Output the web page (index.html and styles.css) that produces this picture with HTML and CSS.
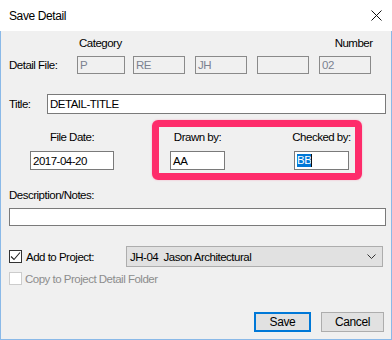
FILE: index.html
```html
<!DOCTYPE html>
<html lang="en">
<head>
    <meta charset="UTF-8">
    <title>Save Detail</title>
    <link rel="stylesheet" href="styles.css">
</head>
<body>
    <div class="dialog">
        <div class="titlebar">
            <span class="title">Save Detail</span>
            <svg class="close" width="11" height="11" viewBox="0 0 11 11"><path d="M0.5 0.5 L10.5 10.5 M10.5 0.5 L0.5 10.5" stroke="#111" stroke-width="1" fill="none"/></svg>
        </div>
        <div class="content">
            <div class="file-head">
                <span class="head-cat">Category</span>
                <span class="head-num">Number</span>
            </div>
            <div class="file-row">
                <span class="row-label">Detail File:</span>
                <div class="seg seg-first">P</div>
                <div class="seg">RE</div>
                <div class="seg">JH</div>
                <div class="seg"></div>
                <div class="seg">02</div>
            </div>
            <div class="title-row">
                <span class="row-label title-label">Title:</span>
                <div class="textbox title-box">DETAIL-TITLE</div>
            </div>
            <div class="people-row">
                <div class="col date-col">
                    <span>File Date:</span>
                    <div class="textbox date-box">2017-04-20</div>
                </div>
                <div class="highlight">
                    <div class="col">
                        <span>Drawn by:</span>
                        <div class="textbox small-box">AA</div>
                    </div>
                    <div class="col checked-col">
                        <span>Checked by:</span>
                        <div class="textbox small-box"><span class="selected">BB</span><span class="caret"></span></div>
                    </div>
                </div>
            </div>
            <div class="notes">
                <span>Description/Notes:</span>
                <div class="textbox notes-box"></div>
            </div>
            <div class="project-row">
                <span class="check">
                    <svg width="11" height="11" viewBox="0 0 11 11"><path d="M1 5.5 L4 8.5 L10 1.5" stroke="#222" stroke-width="1.1" fill="none"/></svg>
                </span>
                <span class="project-label">Add to Project:</span>
                <div class="select">
                    <span>JH-04&nbsp; Jason Architectural</span>
                    <svg width="9" height="5" viewBox="0 0 9 5"><path d="M0.5 0.5 L4.5 4.5 L8.5 0.5" stroke="#333" stroke-width="1" fill="none"/></svg>
                </div>
            </div>
            <div class="copy-row">
                <span class="check check-off"></span>
                <span class="copy-label">Copy to Project Detail Folder</span>
            </div>
            <div class="buttons">
                <button class="btn btn-default">Save</button>
                <button class="btn btn-cancel">Cancel</button>
            </div>
        </div>
    </div>
</body>
</html>
```

FILE: styles.css
```css
html, body {
    margin: 0;
    padding: 0;
    background: #f0f0f0;
}
body {
    font-family: "Liberation Sans", Arial, sans-serif;
    font-size: 11.5px;
    letter-spacing: -0.5px;
    color: #000;
}
.dialog {
    width: 392px;
    height: 340px;
    box-sizing: border-box;
    background: #f0f0f0;
    display: flex;
    flex-direction: column;
}
/* Barra de titulo */
.titlebar {
    height: 31px;
    background: #fff;
    display: flex;
    align-items: center;
    padding: 0 10px 0 9px;
    flex-shrink: 0;
}
.title {
    flex: 1;
    font-size: 12px;
    letter-spacing: -0.4px;
    margin-top: 1px;
}
.close {
    display: block;
}
.content {
    flex: 1;
    border: 1px solid #8ab9e8;
    border-top: none;
    padding: 5px 5px 0 8px;
    display: flex;
    flex-direction: column;
}
.file-head {
    height: 14px;
    line-height: 14px;
    display: flex;
}
.head-cat {
    margin-left: 70px;
}
.head-num {
    margin-left: 213px;
}
.file-row {
    margin-top: 6px;
    height: 18px;
    display: flex;
    align-items: center;
}
.row-label {
    width: 68px;
    flex-shrink: 0;
}
.seg {
    width: 52px;
    height: 18px;
    box-sizing: border-box;
    border: 1px solid #8a8a8a;
    color: #7b8290;
    padding-left: 2px;
    line-height: 16px;
    margin-right: 10px;
}
.seg-first {
    width: 48px;
    margin-right: 8px;
}
.textbox {
    box-sizing: border-box;
    border: 1px solid #7a7a7a;
    background: #fff;
    padding-left: 2px;
    display: flex;
    align-items: center;
}
.title-row {
    margin-top: 20px;
    display: flex;
    align-items: center;
}
.title-label {
    width: 38px;
}
.title-box {
    flex: 1;
    height: 20px;
}
.people-row {
    margin-top: 6px;
    display: flex;
}
.col {
    display: flex;
    flex-direction: column;
    align-items: center;
    width: 55px;
    white-space: nowrap;
}
.col > span {
    height: 14px;
    line-height: 14px;
    margin-bottom: 7px;
}
.date-col {
    width: 84px;
    margin-left: 21px;
    padding-top: 10px;
}
.date-box {
    width: 84px;
    height: 19px;
}
.highlight {
    margin-left: 38px;
    width: 210px;
    height: 60px;
    box-sizing: border-box;
    border: 7px solid #fe2c6b;
    border-radius: 6px;
    box-shadow: 0 0 2px rgba(254, 44, 107, 0.35);
    display: flex;
    padding: 3px 6px 0 11px;
    gap: 69px;
}
.small-box {
    width: 55px;
    height: 19px;
}
.selected {
    background: #0078d7;
    color: #fff;
    line-height: 13px;
}
.caret {
    width: 1px;
    height: 13px;
    background: #111;
}
.notes {
    margin-top: 8px;
    display: flex;
    flex-direction: column;
}
.notes > span {
    height: 14px;
    line-height: 14px;
    margin-bottom: 6px;
}
.notes-box {
    height: 18px;
}
.project-row {
    margin-top: 20px;
    height: 21px;
    display: flex;
    align-items: center;
}
.check {
    width: 13px;
    height: 13px;
    box-sizing: border-box;
    border: 1px solid #333;
    background: #fff;
    display: flex;
    align-items: center;
    justify-content: center;
    flex-shrink: 0;
}
.check-off {
    border-color: #cccccc;
}
.project-label {
    margin-left: 4px;
    width: 100px;
}
.select {
    width: 257px;
    height: 21px;
    box-sizing: border-box;
    border: 1px solid #adadad;
    background: #e1e1e1;
    display: flex;
    align-items: center;
    justify-content: space-between;
    padding: 0 6px 0 3px;
}
.copy-row {
    margin-top: 5px;
    display: flex;
    align-items: center;
}
.copy-label {
    margin-left: 3px;
    color: #8d8d8d;
}
.buttons {
    margin-top: 27px;
    display: flex;
    justify-content: flex-end;
    gap: 10px;
    padding-right: 2px;
}
.btn {
    font-family: inherit;
    font-size: 12px;
    letter-spacing: -0.4px;
    height: 20px;
    box-sizing: border-box;
    border: 1px solid #adadad;
    background: #e1e1e1;
    padding: 0;
    color: #000;
}
.btn-default {
    width: 57px;
    border: 2px solid #0078d7;
}
.btn-cancel {
    width: 63px;
}
```
